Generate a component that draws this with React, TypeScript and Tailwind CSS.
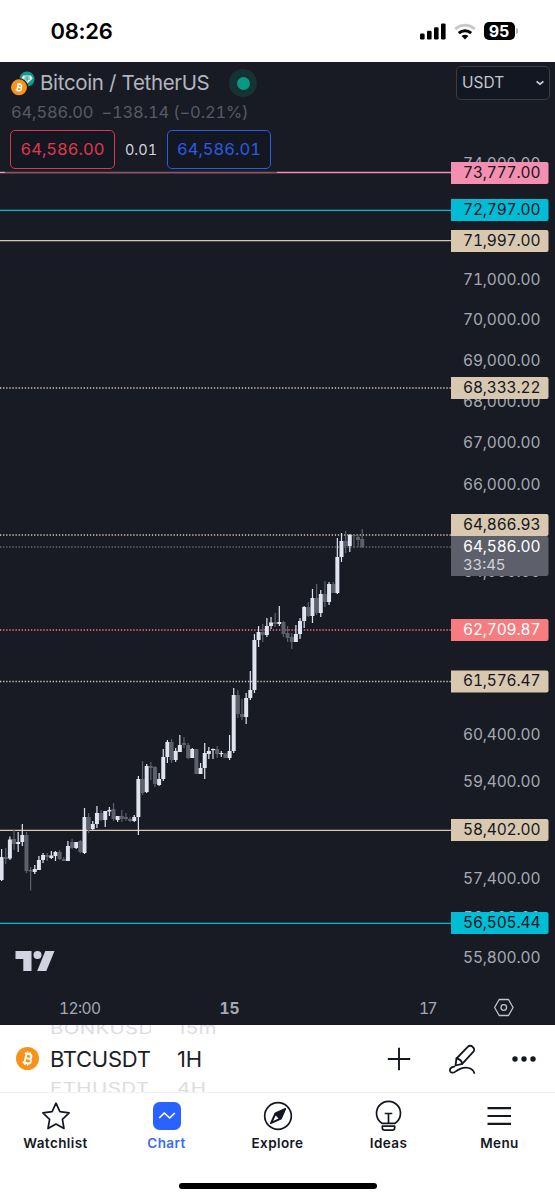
import type { ReactNode } from "react";
import clsx from "clsx";

// [high, bodyTop, bodyBottom, low, rising]
type Candle = [number, number, number, number, 0 | 1];

const CANDLES: Candle[] = [
  [849, 857, 880, 881, 1], [848, 857, 859, 864, 0], [836.5, 839.5, 858.5, 860, 1],
  [830, 839, 844, 850, 0], [832, 842, 844, 852, 1], [824, 835, 842, 846, 1],
  [832, 835, 871, 873, 0], [867, 870, 871.5, 890.5, 0], [865, 869, 872, 874, 1],
  [856, 860, 870, 870, 1], [853, 855, 860, 863, 1], [853, 855, 857, 861, 0],
  [851, 855.5, 858, 859, 1], [851, 852, 856, 861, 1], [850, 852, 859, 860, 0],
  [857, 859, 861, 861, 0], [841, 846, 861, 861, 1], [839, 842, 848, 849, 0],
  [842, 842, 848, 849, 1], [840, 841, 852, 853, 0], [808, 817, 853, 854, 1],
  [813, 817, 829, 833, 0], [821, 824, 829, 830, 1], [806, 813, 824, 828, 1],
  [810, 813, 820, 821, 0], [811, 811, 820, 827, 1], [807, 810, 811.5, 816, 1],
  [803, 809, 819, 821, 0], [816, 816, 820, 822, 1], [810, 816, 819, 822, 0],
  [813, 817, 819, 821, 0], [817, 819, 821, 822, 0], [815, 817, 821, 822, 1],
  [776, 779, 817, 835, 1], [761, 779, 793, 795, 0], [764, 766, 792, 793, 1],
  [762, 766, 768, 780, 0], [766, 767, 784, 787, 0], [773, 779, 785, 786, 1],
  [749, 757, 779, 781, 1], [740, 742, 757, 763, 1], [739, 742, 760, 763, 0],
  [748, 751, 760, 762, 1], [735, 745, 752, 752, 1], [737, 743, 745, 748, 0],
  [743, 745, 758, 759, 0], [748, 749, 758, 758, 1], [749, 749, 774, 774, 0],
  [763, 768, 774, 774, 1], [743, 753, 768, 779, 1], [747, 751, 754, 759, 1],
  [748.5, 749, 750, 759, 1], [746, 749, 754, 758, 0], [751, 753, 754, 757, 1],
  [753, 753.5, 758, 758, 0], [735, 751, 758, 760, 1], [688, 695, 751, 753, 1],
  [690, 695, 714, 718, 0], [699, 714, 717, 720, 0], [693, 698, 717, 724, 1],
  [671, 690, 698, 700, 1], [634, 640, 690, 693, 1], [626, 632, 640, 647, 1],
  [624, 632, 635, 642, 0], [618, 626, 635, 637, 1], [617, 622.5, 626, 629, 1],
  [613, 622, 624, 627, 0], [606, 622, 624, 626, 1], [621, 622, 634, 637, 0],
  [626, 633, 638, 642, 0], [633, 637, 642, 649, 0], [625, 634, 642, 642, 1],
  [618, 621, 634, 639, 1], [606, 607, 621, 628, 1], [602, 607, 616, 617, 0],
  [589, 598, 616, 623, 1], [584, 598, 613, 615, 0], [590, 594, 613, 617, 1],
  [581, 594, 602, 607, 0], [582, 584, 602, 605, 1], [582, 584, 593, 593, 0],
  [538, 557, 593, 594, 1], [533, 541, 557, 562, 1], [531, 541, 546, 553, 0],
  [534, 535, 546, 552, 1], [535, 535, 536, 548, 0], [535, 537, 540, 547, 0],
  [529, 539, 547, 548, 0],
];

const TICKS = [
  { y: 163, label: "74,000.00" },
  { y: 279, label: "71,000.00" },
  { y: 319.5, label: "70,000.00" },
  { y: 360, label: "69,000.00" },
  { y: 401, label: "68,000.00" },
  { y: 442, label: "67,000.00" },
  { y: 484.5, label: "66,000.00" },
  { y: 571.5, label: "64,000.00" },
  { y: 734.5, label: "60,400.00" },
  { y: 781.5, label: "59,400.00" },
  { y: 878, label: "57,400.00" },
  { y: 917, label: "56,600.00" },
  { y: 957.5, label: "55,800.00" },
];

const LEVELS = [
  { y: 172.5, box: 162, label: "73,777.00", color: "#f48fb1" },
  { y: 210.3, box: 199, label: "72,797.00", color: "#00bcd4" },
  { y: 240.7, box: 230, label: "71,997.00", color: "#d9c8b0" },
  { y: 388, box: 377, label: "68,333.22", color: "#d9c8b0", dotted: true },
  { y: 535, box: 514, label: "64,866.93", color: "#d9c8b0", dotted: true },
  { y: 630, box: 619, label: "62,709.87", color: "#f77c80", dotted: true, light: true },
  { y: 681.5, box: 670.5, label: "61,576.47", color: "#d9c8b0", dotted: true },
  { y: 830.4, box: 819, label: "58,402.00", color: "#d9c8b0" },
  { y: 923.3, box: 912, label: "56,505.44", color: "#00bcd4" },
];

const tagPath = (y: number, h: number) =>
  `M451 ${y}H546.5a2 2 0 0 1 2 2V${y + h - 2}a2 2 0 0 1-2 2H451Z`;

function AxisText({ y, fill, children }: { y: number; fill: string; children: string }) {
  return (
    <text x={463} y={y + 5.6} fill={fill} fontSize={15.5} textLength={77.5}>
      {children}
    </text>
  );
}

function PriceChart() {
  return (
    <svg viewBox="0 62 555 963" className="block h-[963px] w-[555px] tabular-nums">
      {LEVELS.map((l) => (
        <line
          key={l.label}
          x1={0}
          x2={451}
          y1={l.y}
          y2={l.y}
          stroke={l.color}
          strokeWidth={l.dotted ? 1.4 : 1.3}
          strokeDasharray={l.dotted ? "1.3 1.8" : undefined}
        />
      ))}
      <line x1={0} x2={451} y1={547} y2={547} stroke="#6a6d78" strokeWidth={1.4} strokeDasharray="1.3 1.8" />

      {CANDLES.map(([high, top, bottom, low, up], i) => {
        const x = 1.6 + i * 4.145;
        return (
          <g key={i} fill={up ? "#e0e3f0" : "#5d606b"}>
            <rect x={x - 0.6} y={high} width={1.2} height={low - high} />
            <rect x={x - 2} y={top} width={4} height={Math.max(bottom - top, 1.2)} />
          </g>
        );
      })}

      {TICKS.map((t) => (
        <AxisText key={t.label} y={t.y} fill="#a6a9b3">
          {t.label}
        </AxisText>
      ))}
      {LEVELS.map((l) => (
        <g key={l.label}>
          <path d={tagPath(l.box, 22)} fill={l.color} />
          <AxisText y={l.box + 10} fill={l.light ? "#ffffff" : "#14161d"}>
            {l.label}
          </AxisText>
        </g>
      ))}
      <path d={tagPath(536, 40)} fill="#5d606b" />
      <AxisText y={546} fill="#ffffff">64,586.00</AxisText>
      <text x={463} y={569.5} fill="#d0d2d9" fontSize={15} textLength={42.5}>33:45</text>

      {/* TradingView mark */}
      <g fill="#d1d4e0">
        <path d="M15.5 951H31.5V971H23.3V959H15.5Z" />
        <circle cx={37.5} cy={955} r={4} />
        <path d="M45.3 951H54.5L46.3 971H37.2Z" />
      </g>

      <g fill="#a6a9b3" fontSize={15.5}>
        <text x={59} y={1013.5} textLength={42}>12:00</text>
        <text x={219.5} y={1013.5} textLength={20} fontWeight={700}>15</text>
        <text x={419} y={1013.5} textLength={18.5}>17</text>
      </g>
      <g fill="none" stroke="#c1c4cd" strokeWidth={1.3}>
        <path d="M499.2 999.5h9.3l4.6 8-4.6 8h-9.3l-4.6-8Z" strokeLinejoin="round" />
        <circle cx={503.8} cy={1007.5} r={2.8} />
      </g>
    </svg>
  );
}

function BitcoinIcon({ className }: { className?: string }) {
  return (
    <svg viewBox="0 0 24 24" className={className}>
      <circle cx="12" cy="12" r="12" fill="#f7931a" />
      <g transform="rotate(13 12 12)" fill="none" stroke="#fff" strokeWidth="2">
        <path d="M8 7.2h5.2a2.3 2.3 0 0 1 0 4.7H9.7M9.7 11.9h4a2.5 2.5 0 0 1 0 5H8M9.8 7.2v9.7" />
        <path d="M10.7 4.8v2.4M13.6 4.8v2.4M10.7 16.9v2.4M13.6 16.9v2.4" strokeWidth="1.4" />
      </g>
    </svg>
  );
}

function PairIcon() {
  return (
    <svg viewBox="0 0 24 25" className="h-[25px] w-6">
      <circle cx="16" cy="8" r="7.6" fill="#159a91" />
      <path d="M12.3 4.5h7.4l2 3-5.7 5.3-5.7-5.3Z" fill="#e4f4f2" />
      <path d="M13.5 6h5M16 6v4.5M12.8 8h6.4" stroke="#159a91" strokeWidth="0.9" />
      <circle cx="8" cy="16.3" r="9.2" fill="#181b24" />
      <circle cx="8" cy="16.3" r="8" fill="#f7931a" />
      <g transform="rotate(13 8 16.3)" fill="none" stroke="#fff" strokeWidth="1.4">
        <path d="M5.3 13.3h3.6a1.4 1.4 0 0 1 0 3H6.6M6.6 16.3h2.6a1.5 1.5 0 0 1 0 3.1H5.3M6.6 13.3v6" />
        <path d="M7.4 12v1.3M9 12v1.3M7.4 19.4v1.3M9 19.4v1.3" strokeWidth="0.9" />
      </g>
    </svg>
  );
}

function StatusBar() {
  return (
    <div className="flex h-[62px] items-center justify-between bg-white pr-[37px] pl-[50.5px]">
      <span className="text-[22px] font-semibold tracking-[-0.25px] text-black">08:26</span>
      <div className="flex items-center">
        <svg viewBox="0 0 26 17" className="h-[17px] w-[26px]">
          <rect x="0" y="10.5" width="4.6" height="6" rx="1.3" />
          <rect x="7" y="7.8" width="4.6" height="8.7" rx="1.3" />
          <rect x="14" y="4.3" width="4.6" height="12.2" rx="1.3" />
          <rect x="21" y="0.4" width="4.6" height="16.1" rx="1.3" />
        </svg>
        <svg viewBox="0 0 22 17" className="ml-2 h-[17px] w-[22px]" fill="none" strokeWidth="3">
          <path d="M1.3 6.2a14 14 0 0 1 19.4 0" stroke="#c9c9c9" />
          <path d="M4.8 10.2a9 9 0 0 1 12.4 0" stroke="#000" />
          <path d="M11 16.5 7.6 13a4.9 4.9 0 0 1 6.8 0Z" fill="#000" />
        </svg>
        <div className="ml-2 flex h-[18px] w-[31px] items-center justify-center rounded-[5px] bg-black text-[16px] font-bold text-white">
          95
        </div>
        <div className="ml-[1.5px] h-1.5 w-[2px] rounded-r bg-[#b5b5b5]" />
      </div>
    </div>
  );
}

function ChartHeader() {
  return (
    <div className="absolute top-0 left-0 flex w-full items-start justify-between">
      <div className="ml-[5px] w-[272px] bg-[#181b24]/50 pl-[6px]">
        <div className="flex h-[42px] items-center">
          <PairIcon />
          <h1 className="ml-[5px] w-[170px] text-[20.5px] tracking-[-0.33px] whitespace-nowrap text-[#b2b5be]">
            Bitcoin / TetherUS
          </h1>
          <span className="ml-[19px] flex size-7 items-center justify-center rounded-full bg-[#173234]">
            <span className="size-[13px] rounded-full bg-[#089981]" />
          </span>
        </div>
        <div className="flex h-[17px] items-center gap-2 text-[16.5px] tracking-[-0.15px] whitespace-nowrap text-[#575a65] tabular-nums">
          <span>64,586.00</span>
          <span>−138.14 (−0.21%)</span>
        </div>
        <div className="mt-[9px] -ml-px flex h-[43px] items-start tabular-nums">
          <button className="h-[39px] w-[105px] rounded-[5px] border-[1.5px] border-[#e0374b] bg-[#131722] text-[16.5px] tracking-[0.05px] text-[#e0374b]">
            64,586.00
          </button>
          <span className="flex h-[39px] w-[52px] items-center justify-center text-[14.5px] text-[#d1d4dc]">
            0.01
          </span>
          <button className="h-[39px] w-[104px] rounded-[5px] border-[1.5px] border-[#2d5be3] bg-[#131722] text-[16.5px] tracking-[0.05px] text-[#2d5be3]">
            64,586.01
          </button>
        </div>
      </div>
      <button className="mt-1 mr-[5px] flex h-[34px] w-[94px] items-center justify-between rounded-[5px] border-[1.5px] border-[#3a3d48] bg-[#131722] pr-[4px] pl-[5px] text-[15.5px] text-[#c3c6cf]">
        USDT
        <svg viewBox="0 0 10 6" className="h-1.5 w-2.5" fill="none" stroke="#d1d4dc" strokeWidth="1.7">
          <path d="M1.6 1.3 5 4.1l3.4-2.8" />
        </svg>
      </button>
    </div>
  );
}

function Wheel({ prev, value, next, className }: { prev: string; value: string; next: string; className: string }) {
  return (
    <div className={clsx("flex h-[67px] flex-col justify-center overflow-hidden whitespace-nowrap", className)}>
      <span className="h-6 origin-left scale-y-75 text-[20.5px] leading-6 tracking-[0.3px] text-[#dcdde0]">{prev}</span>
      <span className="h-9 text-[22px] leading-9 tracking-[-0.3px] text-[#1c1e28]">{value}</span>
      <span className="h-6 origin-left scale-y-75 text-[20.5px] leading-6 tracking-[0.4px] text-[#dcdde0]">{next}</span>
    </div>
  );
}

function SymbolBar() {
  return (
    <div className="flex h-[68px] items-center border-b border-[#f0f1f3] bg-white pl-4 text-[#131722]">
      <BitcoinIcon className="size-[23px]" />
      <Wheel prev="BONKUSDT" value="BTCUSDT" next="ETHUSDT" className="ml-[11px] w-[101px]" />
      <Wheel prev="15m" value="1H" next="4H" className="ml-[26px] w-[50px]" />
      <svg viewBox="0 0 24 24" className="ml-[160px] size-6" stroke="currentColor" strokeWidth="1.9">
        <path d="M12 .8v22.4M.8 12h22.4" />
      </svg>
      <svg
        viewBox="0 0 30 30"
        className="ml-9 size-[30px]"
        fill="none"
        stroke="currentColor"
        strokeWidth="1.8"
        strokeLinecap="round"
        strokeLinejoin="round"
      >
        <path d="m8.5 21.5 1-7L21 2.7a3 3 0 0 1 4.4 0l.8.8a3 3 0 0 1 0 4.4L15.2 19.8Z" />
        <path d="M9.5 14.5c2.7.4 5.2 2.2 5.7 5.3" />
        <path d="M7.2 22.6c-3 .2-5 2.5-4 4.7 1 1.9 3.3 1.7 5.2.3 4-2.9 8.6-4.9 13.3-3.6 3 .8 4.8 2.3 5.6 5" />
      </svg>
      <svg viewBox="0 0 24 6" className="ml-[35px] h-1.5 w-6" fill="currentColor">
        <circle cx="3" cy="3" r="2.7" />
        <circle cx="12" cy="3" r="2.7" />
        <circle cx="21" cy="3" r="2.7" />
      </svg>
    </div>
  );
}

function Tab({ label, active, children }: { label: string; active?: boolean; children: ReactNode }) {
  return (
    <a className={clsx("flex w-[20%] flex-col items-center", active ? "text-[#2962ff]" : "text-[#131722]")}>
      <svg
        viewBox="0 0 30 30"
        className="size-[30px] overflow-visible"
        fill="none"
        stroke="currentColor"
        strokeWidth="1.7"
        strokeLinejoin="round"
      >
        {children}
      </svg>
      <span className={clsx("mt-[2px] text-[13.5px] leading-5 font-semibold tracking-[0.4px]", active ? "text-[#3a6cf0]" : "text-[#131722]")}>
        {label}
      </span>
    </a>
  );
}

function TabBar() {
  return (
    <nav className="flex h-[90px] w-[555px] bg-white pt-2">
      <Tab label="Watchlist">
        <path d="m15 2.2 3.9 8.5 9.2 1.2-6.7 6.4 1.6 9.2-8-4.4-8 4.4 1.6-9.2-6.7-6.4 9.2-1.2Z" />
      </Tab>
      <Tab label="Chart" active>
        <rect x="1" y="1" width="28" height="28" rx="6.5" fill="currentColor" stroke="none" />
        <path d="m7.2 17 5.1-5 5.4 5 5.1-5" stroke="#fff" strokeWidth="1.7" />
      </Tab>
      <Tab label="Explore">
        <circle cx="15" cy="15" r="13.3" />
        <path d="M22.3 7.8 12.4 12.2 7.8 22.3 17.9 17.8Z" fill="currentColor" />
        <path d="m12.7 14.6 2.8 2.8-5.4 2.5Z" fill="#fff" stroke="none" />
      </Tab>
      <Tab label="Ideas">
        <path d="M7.9 22.3a12 12 0 1 1 13.2 0Z" />
        <path d="M10.7 12.5h7.6M14.5 12.5v9.8M8.3 25.2h12.4v1.6a2.5 2.5 0 0 1-2.5 2.4h-7.4a2.5 2.5 0 0 1-2.5-2.4Z" />
      </Tab>
      <Tab label="Menu">
        <path d="M2.5 7.2h23.5M2.5 15h23.5M2.5 22.8h23.5" strokeWidth="2.2" />
      </Tab>
    </nav>
  );
}

export default function App() {
  return (
    <div className="flex h-[1200px] w-[555px] flex-col overflow-hidden bg-white font-['Inter','Liberation_Sans',sans-serif]">
      <StatusBar />
      <main className="relative h-[963px] bg-[#181b24]">
        <PriceChart />
        <ChartHeader />
      </main>
      <SymbolBar />
      <TabBar />
      <div className="mx-auto h-[6px] w-[198px] rounded-full bg-black" />
    </div>
  );
}
